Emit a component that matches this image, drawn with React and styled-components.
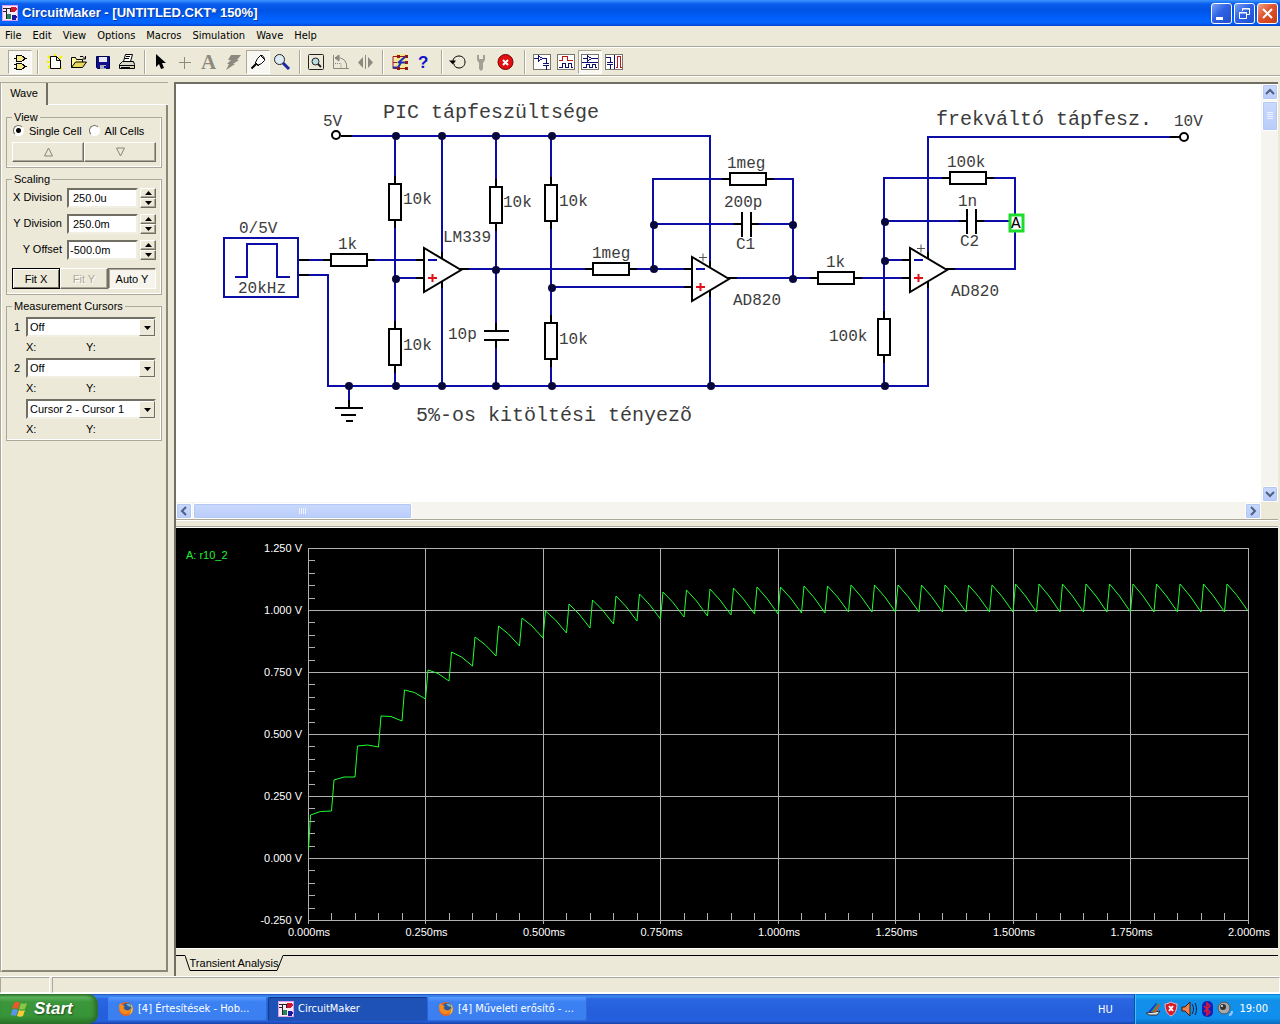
import styled, { createGlobalStyle, css } from "styled-components";

const GlobalStyle = createGlobalStyle`
  * {
    box-sizing: border-box;
  }
  body {
    margin: 0;
    background: #ece9d8;
    color: #000;
    font-family: "Liberation Sans", Arial, sans-serif;
    font-size: 11px;
    line-height: 12px;
  }
  button, input, select {
    font: inherit;
    color: inherit;
    margin: 0;
    border-radius: 0;
  }
`;

const Window = styled.div`
  display: flex;
  flex-direction: column;
  min-height: 100vh;
`;

/* title bar */
const TitleBar = styled.header`
  display: flex;
  align-items: center;
  gap: 4px;
  height: 26px;
  padding: 0 2px;
  background: linear-gradient(#3c96ff 0, #0a5cec 4px, #0053e4 10px, #0060fc 18px, #0466ff 23px, #0043cf 26px);
`;
const Title = styled.h1`
  flex: 1;
  margin: 0;
  font-family: "Liberation Sans", Arial, sans-serif;
  font-size: 13px;
  font-weight: bold;
  line-height: 16px;
  color: #fff;
  text-shadow: 1px 1px #0a3a9c;
`;
const CaptionButtons = styled.div`
  display: flex;
  gap: 2px;
`;
const CaptionButton = styled.button`
  width: 21px;
  height: 21px;
  padding: 0;
  border: 1px solid #fff;
  border-radius: 3px;
  background: ${(p) =>
    p.$close
      ? "linear-gradient(135deg, #f0a088, #e0532c 45%, #c43c14)"
      : "linear-gradient(135deg, #7aa2f4, #2f62e4 45%, #1f4fd0)"};
  svg {
    display: block;
  }
`;

/* menu and toolbar */
const MenuBar = styled.nav`
  display: flex;
  align-items: center;
  gap: 11px;
  height: 21px;
  padding: 0 5px;
  border-bottom: 1px solid #aca899;
`;
const MenuItem = styled.button`
  padding: 0;
  border: none;
  background: none;
  font-family: "DejaVu Sans Condensed", "DejaVu Sans", sans-serif;
  font-size: 11px;
`;
const ToolBar = styled.div`
  display: flex;
  align-items: center;
  height: 29px;
  padding: 0 8px;
  border-top: 1px solid #fff;
  border-bottom: 1px solid #aca899;
  box-shadow: 0 1px #fff;
`;
const ToolSeparator = styled.div`
  width: 2px;
  height: 24px;
  margin: 0 4px 0 5px;
  border-left: 1px solid #aca899;
  border-right: 1px solid #fff;
`;
const ToolButton = styled.button`
  width: 24px;
  height: 24px;
  padding: 0;
  border: 1px solid transparent;
  background: none;
  ${(p) =>
    p.$pressed &&
    css`
      border-color: #aca899 #fff #fff #aca899;
      background: #f8f7f1;
    `}
  svg {
    display: block;
    margin: -1px;
  }
`;

/* workspace */
const Workspace = styled.main`
  flex: 1;
  display: flex;
  gap: 6px;
  padding: 6px 2px 0 0;
`;
const SidePanel = styled.aside`
  flex: 0 0 168px;
  display: flex;
  flex-direction: column;
  margin-bottom: 4px;
  border-top: 1px solid #aca899;
  border-left: 1px solid #aca899;
`;
const SideTabs = styled.div`
  display: flex;
  height: 22px;
  &::after {
    content: "";
    flex: 1;
    border-bottom: 1px solid #fff;
  }
`;
const SideTab = styled.button`
  width: 47px;
  padding: 0 0 2px;
  border: none;
  border-left: 1px solid #fff;
  border-right: 2px solid #716f64;
  background: #ece9d8;
`;
const SideBody = styled.div`
  flex: 1;
  display: flex;
  flex-direction: column;
  gap: 5px;
  padding: 6px 4px 0;
  border-left: 1px solid #fff;
  border-right: 2px solid #8b887a;
  border-bottom: 2px solid #8b887a;
`;
const Group = styled.fieldset`
  min-width: 0;
  margin: 0;
  padding: ${(p) => p.$top || 0}px 5px 5px;
  border: 1px solid #aca899;
  box-shadow: inset -1px -1px #fff;
  &:last-child {
    padding-bottom: 0;
  }
`;
const GroupTitle = styled.legend`
  padding: 0 2px;
  line-height: 12px;
`;
const RadioRow = styled.div`
  display: flex;
  gap: 6px;
  height: 15px;
`;
const RadioLabel = styled.label`
  display: flex;
  align-items: center;
  gap: 5px;
  padding-left: 1px;
  white-space: nowrap;
`;
const Radio = styled.input`
  appearance: none;
  width: 11px;
  height: 11px;
  border: 1px solid;
  border-color: #716f64 #fff #fff #716f64;
  border-radius: 50%;
  background: #fff;
  &:checked {
    background: radial-gradient(#000 2px, #fff 3px);
  }
`;
const ButtonRow = styled.div`
  display: flex;
  height: ${(p) => p.$height}px;
  margin-top: ${(p) => p.$gap}px;
`;
const PushButton = styled.button`
  flex: 1;
  padding: 0;
  border: 1px solid;
  border-color: #fff #716f64 #716f64 #fff;
  background: #ece9d8;
  box-shadow: inset -1px -1px #aca899;
  svg {
    display: block;
    margin: auto;
  }
  ${(p) =>
    p.$focus &&
    css`
      border-color: #000;
      box-shadow: inset 1px 1px #fff, inset -1px -1px #716f64;
    `}
  ${(p) =>
    p.$pressed &&
    css`
      border-color: #716f64 #fff #fff #716f64;
      background: #f6f4ec;
      box-shadow: inset 1px 1px #aca899;
    `}
  &:disabled {
    color: #aca899;
    text-shadow: 1px 1px #fff;
  }
`;
const FieldRow = styled.div`
  display: grid;
  grid-template-columns: 1fr 71px 16px;
  gap: 2px;
  height: 20px;
  & + & {
    margin-top: 6px;
  }
`;
const FieldLabel = styled.label`
  padding: 3px 3px 0 0;
  text-align: right;
  white-space: nowrap;
`;
const Field = styled.input`
  min-width: 0;
  width: 100%;
  padding: 0 0 0 ${(p) => (p.$negative ? 1 : 4)}px;
  border: 2px solid;
  border-color: #716f64 #f1efe2 #f1efe2 #716f64;
  background: #fff;
`;
const Spinner = styled.div`
  display: grid;
  grid-template-rows: 1fr 1fr;
`;
const CursorRow = styled.div`
  display: grid;
  grid-template-columns: 14px 1fr;
  height: 20px;
  line-height: 20px;
`;
const CursorLabel = styled.label`
  padding-left: 2px;
`;
const Combo = styled.div`
  grid-column: 2;
  display: grid;
  height: 20px;
`;
const Select = styled.select`
  grid-area: 1 / 1;
  appearance: none;
  height: 20px;
  padding: 0 2px;
  border: 2px solid;
  border-color: #716f64 #f1efe2 #f1efe2 #716f64;
  background: #fff;
  line-height: 16px;
`;
const ComboArrow = styled.span`
  grid-area: 1 / 1;
  justify-self: end;
  display: flex;
  align-items: center;
  justify-content: center;
  width: 16px;
  height: 17px;
  margin: 2px 1px 0 0;
  border: 1px solid;
  border-color: #fff #716f64 #716f64 #fff;
  background: #ece9d8;
  pointer-events: none;
`;
const Readout = styled.div`
  display: grid;
  grid-template-columns: 60px 1fr;
  height: 21px;
  padding-left: 14px;
  line-height: 20px;
`;

const Documents = styled.div`
  flex: 1;
  min-width: 0;
  display: flex;
  flex-direction: column;
  border-left: 2px solid #716f64;
`;
const SheetFrame = styled.section`
  flex: 1;
  display: grid;
  grid-template-columns: 1fr 17px;
  grid-template-rows: 1fr 17px;
  min-height: 200px;
  border-top: 2px solid #716f64;
  border-bottom: 1px solid #aca899;
`;
const Sheet = styled.div`
  min-width: 0;
  overflow: hidden;
  background: #fff;
  svg {
    display: block;
  }
`;
const ScrollBar = styled.div`
  display: flex;
  flex-direction: ${(p) => (p.$vertical ? "column" : "row")};
  justify-content: space-between;
  padding: ${(p) => (p.$vertical ? "0 0 0 1px" : "1px 0 0")};
  background: #f5f4ee;
`;
const ScrollGroup = styled.div`
  display: flex;
  flex-direction: inherit;
  gap: 1px;
`;
const ScrollButton = styled.button`
  width: ${(p) => p.$w || 16}px;
  height: ${(p) => p.$h || 16}px;
  padding: 0;
  border: 1px solid #fff;
  border-radius: 2px;
  box-shadow: inset 0 0 0 1px #b4c8f4;
  background: linear-gradient(#cad9fc, #b9cdfa);
  svg {
    display: block;
    margin: auto;
  }
`;
const Splitter = styled.div`
  height: 8px;
  border-top: 1px solid #fff;
  border-bottom: 1px solid #fff;
  box-shadow: inset 0 -1px #aca899;
`;
const PlotArea = styled.section`
  height: 420px;
  background: #000;
  svg {
    display: block;
    width: 100%;
    height: 100%;
  }
`;
const PlotTabs = styled.div`
  display: flex;
  height: 28px;
  padding-top: 6px;
  border-top: 1px solid #fff;
`;
const PlotRule = styled.div`
  flex: ${(p) => (p.$lead ? "0 0 9px" : "1")};
  border-top: 1px solid #000;
`;
const PlotTab = styled.button`
  display: grid;
  padding: 0;
  height: 16px;
  border: none;
  background: none;
  svg,
  span {
    grid-area: 1 / 1;
  }
  span {
    padding-top: 1px;
    line-height: 14px;
  }
`;

const StatusBar = styled.footer`
  display: grid;
  grid-template-columns: 50px 1fr;
  gap: 2px;
  height: 18px;
  border-top: 1px solid #fff;
  border-bottom: 1px solid #fff;
`;
const StatusCell = styled.div`
  border: 1px solid;
  border-color: #aca899 #fff #fff #aca899;
`;

/* taskbar */
const TaskBar = styled.footer`
  display: flex;
  height: 30px;
  color: #fff;
  font-family: "DejaVu Sans Condensed", "DejaVu Sans", sans-serif;
  background: linear-gradient(#1f4fb8 0, #3f8cf3 2px, #2a66e2 5px, #245edb 20px, #2460e0 27px, #1941a5);
`;
const StartButton = styled.button`
  display: flex;
  align-items: center;
  gap: 4px;
  width: 98px;
  padding: 0 0 0 10px;
  border: none;
  border-radius: 0 10px 10px 0;
  background: linear-gradient(#2c7a2b 0, #5eb65c 3px, #3c963b 8px, #379437 22px, #2a742a);
  box-shadow: inset -3px 0 4px #2a6a2a;
  color: #fff;
  font-family: "Liberation Sans", Arial, sans-serif;
  font-size: 17px;
  font-style: italic;
  font-weight: bold;
  text-shadow: 1px 1px 2px #1c4a1c;
`;
const Tasks = styled.div`
  flex: 1;
  display: flex;
  gap: 1px;
  padding: 3px 0 3px 10px;
`;
const TaskButton = styled.button`
  display: flex;
  align-items: center;
  gap: 4px;
  width: 159px;
  padding: 0 10px;
  border: none;
  border-radius: 2px;
  background: ${(p) => (p.$active ? "#1e52b7" : "linear-gradient(#5a9cff, #3c81f3 5px, #3a7ef0)")};
  box-shadow: ${(p) => (p.$active ? "inset 1px 1px 1px #123a88" : "inset -1px -1px #2f6ad8")};
  white-space: nowrap;
`;
const Language = styled.div`
  width: 36px;
  line-height: 31px;
`;
const Tray = styled.div`
  display: flex;
  align-items: center;
  gap: 2px;
  width: 146px;
  padding: 0 12px 0 10px;
  border-left: 1px solid #0b4fa8;
  box-shadow: inset 1px 0 #3fc0ff;
  background: linear-gradient(#0c78d8 0, #1cb0f6 2px, #1290e8 6px, #0f8fee 24px, #0b6cc0);
`;
const Clock = styled.time`
  margin-left: auto;
`;

/* schematic */
const PartText = styled.text`
  font-family: "Liberation Mono", "Courier New", monospace;
  font-size: ${(p) => (p.$big ? 20 : 16)}px;
  fill: ${(p) => p.$fill || "#3c3c3c"};
`;
const PlotText = styled.text`
  font-family: "Liberation Sans", Arial, sans-serif;
  font-size: 11px;
  fill: ${(p) => p.$fill || "#fff"};
`;

const toolIcons = {
  gates: (
    <g stroke="#000" fill="#f4e98a" shapeRendering="crispEdges">
      <path d="M6 8.500h4M16 8.500h3M6 14.500h3M6 18.500h3M16 16.500h3" />
      <path d="M8.500 5.500h5c2 1 3 2 3 3s-1 2-3 3h-5zM8.500 13.500h5c2 1 3 2 3 3s-1 2-3 3h-5z" />
    </g>
  ),
  create: (
    <g>
      <path d="M5 6l4 4M5 18l3-3M19 6l-3 3M19 19l-3-3M4 12h4M12 4v4" stroke="#f5f200" strokeWidth="2" />
      <path d="M7.500 6.500h6l4 4v8h-10z M13.500 6.500v4h4" fill="#fff" stroke="#000" />
    </g>
  ),
  open: (
    <g stroke="#000">
      <path d="M4.500 17.500v-10h4l1 2h6v3" fill="#fff8a0" />
      <path d="M4.500 17.500l4-5.500h11l-4 5.500z" fill="#e8d85c" />
      <path d="M13 6.500h3l2 2M18.500 6v3h-3" fill="none" />
    </g>
  ),
  save: (
    <g>
      <path d="M5.500 6.500h13v12h-12l-1-1z" fill="#10108c" stroke="#000050" />
      <path d="M8 7h8v5H8z" fill="#e8e8f8" />
      <path d="M9 15h6v4H9z" fill="#a8b0c0" />
      <path d="M13 16h2v2h-2z" fill="#10108c" />
    </g>
  ),
  print: (
    <g stroke="#000" fill="#fff">
      <path d="M8.500 11.500l2-7h7l-2 7z" />
      <path d="M4.500 14.500l3-3h11l1 3v4h-15zM4.500 15.500h15" fill="#d8d8c8" />
      <path d="M11 6.500h4M10 8.500h4M6 17.500h9" />
      <path d="M16 17h2" stroke="#e0d000" />
    </g>
  ),
  arrow: <path d="M6 4v13l3-3 2 5 3-1-2-5h4z" fill="#000" />,
  cross: <path d="M5 12.500h12M10.500 7v12" stroke="#8c8a80" />,
  text: (
    <text x="3" y="19" fontFamily="Liberation Serif, serif" fontSize="21" fontWeight="bold" fill="#8c8a80">
      A
    </text>
  ),
  bolt: <path d="M9 5h10l-4 5h2l-6 4h2l-9 6 3-6H5l4-4H6z" fill="#8c8a80" />,
  probe: (
    <g fill="#fff" stroke="#000">
      <path d="M5.500 18.500l5-5" strokeWidth="2" />
      <path d="M9.500 12.500l2-4 3-3 2 0 2 3 0 2-3 3-4 2z" />
      <path d="M9 12l4 4M14 5l5 5" />
    </g>
  ),
  zoom: (
    <g>
      <circle cx="9.500" cy="9.500" r="5" fill="#dcecf4" stroke="#222" />
      <path d="M13 13l6 6" stroke="#1828a0" strokeWidth="3" />
    </g>
  ),
  fit: (
    <g stroke="#222" fill="none">
      <rect x="3.500" y="4.500" width="15" height="15" rx="1" />
      <circle cx="10.500" cy="11.500" r="3.500" fill="#b8dce0" />
      <path d="M13 14l3 3" strokeWidth="2" />
    </g>
  ),
  rotate: (
    <g fill="none" stroke="#8c8a80">
      <path d="M4.500 5v13.500H20M17.500 18v-4l-2-4-4-2H6" />
      <path d="M6 8l4-3v6z" fill="#8c8a80" />
      <path d="M6 13.500h6v5" strokeDasharray="1 1" />
    </g>
  ),
  mirror: (
    <g fill="#8c8a80">
      <path d="M10 7v11l-5-5.500zM15 7v11l5-5.500z" />
      <path d="M12 5h1v14h-1z" />
    </g>
  ),
  netlist: (
    <g>
      <path d="M7 4h12v16H7z" fill="#f8e88c" />
      <path d="M19 6.500H5v12h14M5 12.500h4" fill="none" stroke="#a01818" />
      <path d="M5 17.500h5l3-5h6M10 13l8-7" fill="none" stroke="#1830c0" strokeWidth="2" />
      <path d="M9 5h3v3H9zM17 5h3v3h-3zM17 11h3v3h-3zM9 17h3v3H9zM17 17h3v3h-3z" fill="#901818" />
    </g>
  ),
  help: (
    <text x="6" y="18" fontFamily="Liberation Sans, sans-serif" fontSize="17" fontWeight="bold" fill="#1010c8">
      ?
    </text>
  ),
  reset: (
    <g fill="none" stroke="#000">
      <path d="M6 11c0-3 3-5 6-5s6 2 6 6-3 6-6 6-5-2-5-4" />
      <path d="M2 10.500h7l-3 4z" fill="#000" stroke="none" />
    </g>
  ),
  wrench: <path d="M6 5l2 0v4h4V5h2v5l-2 3v6l-2 2-2-2v-6l-2-3z" fill="#a3a195" />,
  stop: (
    <g>
      <circle cx="10.500" cy="12" r="7.500" fill="#e01010" stroke="#700" />
      <path d="M8 10l5 5M13 10l-5 5" stroke="#fff" strokeWidth="2" />
    </g>
  ),
  viewSheet: (
    <g fill="none" shapeRendering="crispEdges">
      <rect x="3.500" y="4.500" width="17" height="15" fill="#fff" stroke="#77756c" />
      <path d="M4 8.500h4M8.500 6v5l4-2.500zM13 8.500h3v5M13 13.500h6M13 15.500h6M16.500 16v4" stroke="#101070" />
    </g>
  ),
  viewWave: (
    <g fill="none" shapeRendering="crispEdges">
      <rect x="3.500" y="4.500" width="17" height="15" fill="#fff" stroke="#77756c" />
      <path d="M5 10.500h3v-4h5v4h6" stroke="#c01818" />
      <path d="M5 17.500h3v-4h3v4h3v-4h3v4h2" stroke="#101070" />
    </g>
  ),
  viewSplitH: (
    <g fill="none" shapeRendering="crispEdges">
      <rect x="3.500" y="4.500" width="17" height="15" fill="#fff" stroke="#77756c" />
      <path d="M5 8.500h4M9.500 6v5l4-2.500zM14 8.500h6M4 12.500h16M5 17.500h3v-3h3v3h3v-3h3v3h2" stroke="#101070" />
    </g>
  ),
  viewSplitV: (
    <g fill="none" shapeRendering="crispEdges">
      <rect x="3.500" y="4.500" width="17" height="15" fill="#fff" stroke="#77756c" />
      <path d="M4 7.500h4v5M5 12.500h6M5 14.500h6M8.500 15v4M12.500 5v14" stroke="#101070" />
      <path d="M14 17.500h1.500v-11h3v11H20" stroke="#c01818" />
    </g>
  ),
};

const tools = [
  [["gates", "Parts browser", true]],
  [["create", "New"], ["open", "Open"], ["save", "Save"], ["print", "Print"]],
  [["arrow", "Select"], ["cross", "Wire"], ["text", "Text"], ["bolt", "Delete"], ["probe", "Probe", true], ["zoom", "Zoom"]],
  [["fit", "Fit"], ["rotate", "Rotate"], ["mirror", "Mirror"]],
  [["netlist", "Netlist"], ["help", "Help"]],
  [["reset", "Reset"], ["wrench", "Setup"], ["stop", "Stop"]],
  [["viewSheet", "Schematic"], ["viewWave", "Waveforms"], ["viewSplitH", "Split horizontal", true], ["viewSplitV", "Split vertical"]],
];

const AppIcon = () => (
  <svg width="16" height="16" shapeRendering="crispEdges">
    <rect width="16" height="16" fill="#f8e8f8" />
    <path d="M1 3h9M1 6h3M4 3v11M4 10h4M8 3v4" stroke="#222" fill="none" />
    <path d="M9 2h4l2 2-2 3H9z" fill="#d01830" />
    <path d="M5 9h4v5H5z" fill="#208858" />
    <path d="M10 10h4l1 2-1 3h-4z" fill="#1818a0" />
    <rect x="0.500" y="0.500" width="15" height="15" fill="none" stroke="#e0a0e8" />
  </svg>
);

const Firefox = () => (
  <svg width="16" height="16">
    <circle cx="8" cy="8" r="7" fill="#e8641c" />
    <circle cx="9" cy="7" r="5" fill="#2c5c9c" />
    <path d="M8 3c3-1 5 0 6 3-2-1-3 0-4-1z" fill="#68b8dc" />
    <path d="M1 5c0-2 2-3 2-3 0 2 2 2 4 3-2 1-1 4 1 4 2 1 4 0 5-2 1 3-2 6-5 6-4 0-7-3-7-8z" fill="#f48a20" />
    <path d="M13 3c3 4 2 9-2 11 2-3 3-6 2-11z" fill="#fcc838" />
  </svg>
);

const Triangle = ({ up, outline }) => (
  <svg width={outline ? 11 : 7} height={outline ? 10 : 4} viewBox={outline ? "0 0 11 10" : "0 0 7 4"}>
    {outline ? (
      <path d={up ? "M5.500 1L9.500 9H1.500z" : "M5.500 9L9.500 1H1.500z"} fill="none" stroke="#88867a" />
    ) : (
      <path d={up ? "M3.500 0L7 4H0z" : "M3.500 4L7 0H0z"} />
    )}
  </svg>
);

const Chevron = ({ turn }) => (
  <svg width="10" height="10">
    <path d="M1 7l4-4 4 4" transform={`rotate(${turn} 5 5)`} fill="none" stroke="#4d6185" strokeWidth="2" />
  </svg>
);

const wires = [
  "M350 136H710V262M710 296V386",
  "M298 275H328V386H928V284",
  "M395 136V386M442 136V258M442 283V386M496 136V331M496 340V386M551 136V386",
  "M298 260H424M396 278H424M460 269H692M552 287H692",
  "M653 269V179H793V278M653 224H742M751 224H793M728 278H910",
  "M884 386V178H1015V269H946M884 221H967M976 221H1015M884 260H910",
  "M1171 137H928V258M349 386V400",
];
const leads = [
  "M341 136H352M1170 137H1180M299 260H309M299 275H309",
  "M395 176V228M395 321V373M496 179V231M551 177V229M551 315V367M884 311V363",
  "M323 260H375M585 269H637M722 179H774M810 278H862M942 178H994",
  "M496 323V331M496 340V348M734 224H742M751 224H759M959 221H967M976 221H984",
  "M416 260H424M416 278H424M460 269H469M684 269H692M684 287H692M728 278H737M902 260H910M902 278H910M946 269H955",
  "M484 331H509M484 340H509M742 212V237M751 212V237M967 209V234M976 209V234",
  "M349 400V408M335 408H363M341 415H356M346 421H353",
  "M442 252V259M442 282V288M710 261V268M710 291V297M928 252V259M928 282V288",
];
const resistorsV = [[389, 184], [389, 329], [490, 187], [545, 185], [545, 323], [878, 319]];
const resistorsH = [[331, 254], [593, 263], [730, 173], [818, 272], [950, 172]];
const joints = [
  [396, 136], [442, 136], [496, 136], [552, 136], [396, 279], [496, 270], [552, 288],
  [654, 225], [654, 269], [793, 225], [793, 279], [885, 222], [885, 261],
  [349, 386], [396, 386], [442, 386], [496, 386], [552, 386], [711, 386], [885, 386],
];
const opamps = [[424, 248], [692, 257], [910, 248]];
const partTexts = [
  [323, 126, "5V"], [403, 204, "10k"], [443, 242, "LM339"], [503, 207, "10k"], [559, 206, "10k"],
  [239, 233, "0/5V"], [238, 293, "20kHz"], [338, 249, "1k"], [403, 350, "10k"], [448, 339, "10p"],
  [559, 344, "10k"], [592, 258, "1meg"], [727, 168, "1meg"], [724, 207, "200p"], [736, 249, "C1"],
  [733, 305, "AD820"], [826, 267, "1k"], [829, 341, "100k"], [947, 167, "100k"], [958, 206, "1n"],
  [960, 246, "C2"], [951, 296, "AD820"], [1174, 126, "10V"],
];

const Schematic = () => (
  <svg width="1085" height="418" viewBox="176 84 1085 418">
    <g shapeRendering="crispEdges" fill="none" strokeWidth="2">
      <path d={wires.join("")} stroke="#0c0ca8" />
      <path d={leads.join("")} stroke="#000" />
      <path d="M224 238h74v59h-74zM235 277h12v-33h30v33h13" stroke="#0c0ca8" />
      {resistorsV.map(([x, y]) => (
        <rect key={`${x}-${y}`} x={x} y={y} width="12" height="36" fill="#fff" stroke="#000" />
      ))}
      {resistorsH.map(([x, y]) => (
        <rect key={`${x}-${y}`} x={x} y={y} width="36" height="12" fill="#fff" stroke="#000" />
      ))}
    </g>
    {opamps.map(([x, y]) => (
      <g key={x} fill="none" strokeWidth="2">
        <path d={`M${x} ${y}v44l37 -22z`} fill="#fff" stroke="#000" />
        <path d={`M${x + 4} ${y + 12}h9`} stroke="#0c0ca8" />
        <path d={`M${x + 4} ${y + 30}h9m-4.500 -4v8`} stroke="#e01018" />
      </g>
    ))}
    <path d="M699 257.500h8m-4 -4v8M917 248.500h8m-4 -4v8" stroke="#555" />
    {joints.map(([x, y]) => (
      <circle key={`${x}-${y}`} cx={x} cy={y} r="4" fill="#08083c" />
    ))}
    <circle cx="336" cy="135" r="4" fill="#fff" stroke="#000" strokeWidth="2" />
    <circle cx="1184" cy="137" r="4" fill="#fff" stroke="#000" strokeWidth="2" />
    {partTexts.map(([x, y, text]) => (
      <PartText key={`${x}-${y}`} x={x} y={y}>{text}</PartText>
    ))}
    <PartText $big x="383" y="118">PIC tápfeszültsége</PartText>
    <PartText $big x="936" y="125">frekváltó tápfesz.</PartText>
    <PartText $big x="416" y="421">5%-os kitöltési tényezõ</PartText>
    <rect x="1010" y="215" width="13" height="16" fill="#fff" stroke="#1cdc2c" strokeWidth="3" />
    <PartText x="1011" y="228" $fill="#000">A</PartText>
  </svg>
);

// sawtooth levels: [after the rising edge, before the next one]
const teeth = [
  [814, 811], [779, 777], [745, 747], [716, 721], [690, 699], [670, 681], [652, 666], [637, 656],
  [626, 646], [618, 638], [611, 633], [604, 628], [600, 624], [596, 621], [594, 619], [592, 617],
  [590, 616], [589, 615], [588, 614], [587, 614], [587, 613], [586, 613], [586, 612], [585, 612],
  [585, 612], [585, 612], [585, 612], [585, 612], [585, 612], [585, 612], [584, 612], [584, 612],
  [584, 612], [584, 612], [584, 612], [584, 612], [584, 612], [584, 612], [584, 612], [584, 611],
];
const trace = teeth.reduce((d, [top, end], i) => {
  const x = 308.5 + i * 23.5;
  const mid = (top + end) / 2 - (i < 3 ? 1 : 2);
  return `${d}L${x + 2} ${top + (i < 3 ? 1 : 0)}L${x + 12} ${mid}L${x + 23} ${end}`;
}, "M308.500 850");
const columns = [...Array(9).keys()];
const rows = [...Array(7).keys()];
const gridX = (step) => Math.floor(308 + step * 23.5) + 0.5;

const Plot = () => (
  <svg viewBox="176 528 1102 420" preserveAspectRatio="xMinYMin meet">
    <g stroke="#b0b0b0" shapeRendering="crispEdges">
      {columns.map((i) => (
        <path key={i} d={`M${gridX(i * 5)} 548V924`} />
      ))}
      {rows.map((i) => (
        <path key={i} d={`M308 ${548.5 + i * 62}H1249`} />
      ))}
      {[...Array(30).keys()].map((i) => (
        <path key={i} d={`M308 ${548.5 + i * 12.4}h7`} />
      ))}
      {[...Array(40).keys()].map((i) => (
        <path key={i} d={`M${gridX(i)} 920v-7`} />
      ))}
    </g>
    <path d={trace} fill="none" stroke="#20ff30" />
    <PlotText x="186" y="559" $fill="#20f030">A: r10_2</PlotText>
    {rows.map((i) => (
      <PlotText key={i} x="302" y={552 + i * 62} textAnchor="end">
        {(1.25 - i * 0.25).toFixed(3)} V
      </PlotText>
    ))}
    {columns.map((i) => (
      <PlotText key={i} x={309 + i * 117.5} y="936" textAnchor="middle">
        {(i * 0.25).toFixed(3)}ms
      </PlotText>
    ))}
  </svg>
);

const CursorPicker = ({ id, number, options }) => (
  <>
    <CursorRow>
      {number && <CursorLabel htmlFor={id}>{number}</CursorLabel>}
      <Combo>
        <Select id={id} aria-label={number ? undefined : "Difference"}>
          {options.map((o) => (
            <option key={o}>{o}</option>
          ))}
        </Select>
        <ComboArrow>
          <Triangle />
        </ComboArrow>
      </Combo>
    </CursorRow>
    <Readout>
      <span>X:</span>
      <span>Y:</span>
    </Readout>
  </>
);

const fields = [
  ["xdiv", "X Division", "250.0u"],
  ["ydiv", "Y Division", "250.0m"],
  ["yoff", "Y Offset", "-500.0m"],
];

const App = () => {
  return (
    <Window>
      <GlobalStyle />
      <TitleBar>
        <AppIcon />
        <Title>CircuitMaker - [UNTITLED.CKT* 150%]</Title>
        <CaptionButtons>
          <CaptionButton aria-label="Minimize">
            <svg width="19" height="19"><path d="M4 13h7v3H4z" fill="#fff" /></svg>
          </CaptionButton>
          <CaptionButton aria-label="Restore">
            <svg width="19" height="19" fill="none" stroke="#fff">
              <path d="M7.500 7V4.500h7v6H12M7 5h8M4.500 8.500h7v6h-7zM4 9h8" />
            </svg>
          </CaptionButton>
          <CaptionButton $close aria-label="Close">
            <svg width="19" height="19"><path d="M5 5l9 9M14 5l-9 9" stroke="#fff" strokeWidth="2" /></svg>
          </CaptionButton>
        </CaptionButtons>
      </TitleBar>
      <MenuBar>
        {["File", "Edit", "View", "Options", "Macros", "Simulation", "Wave", "Help"].map((m) => (
          <MenuItem key={m}>{m}</MenuItem>
        ))}
      </MenuBar>
      <ToolBar>
        {tools.map((group, i) => [
          i > 0 && <ToolSeparator key={i} />,
          ...group.map(([icon, label, pressed]) => (
            <ToolButton key={icon} $pressed={pressed} aria-label={label}>
              <svg width="24" height="24">{toolIcons[icon]}</svg>
            </ToolButton>
          )),
        ])}
      </ToolBar>

      <Workspace>
        <SidePanel>
          <SideTabs>
            <SideTab>Wave</SideTab>
          </SideTabs>
          <SideBody>
            <Group>
              <GroupTitle>View</GroupTitle>
              <RadioRow>
                <RadioLabel>
                  <Radio type="radio" name="cells" defaultChecked />
                  Single Cell
                </RadioLabel>
                <RadioLabel>
                  <Radio type="radio" name="cells" />
                  All Cells
                </RadioLabel>
              </RadioRow>
              <ButtonRow $height={20} $gap={4}>
                <PushButton aria-label="Previous cell"><Triangle up outline /></PushButton>
                <PushButton aria-label="Next cell"><Triangle outline /></PushButton>
              </ButtonRow>
            </Group>
            <Group $top={3}>
              <GroupTitle>Scaling</GroupTitle>
              {fields.map(([id, label, value]) => (
                <FieldRow key={id}>
                  <FieldLabel htmlFor={id}>{label}</FieldLabel>
                  <Field id={id} defaultValue={value} $negative={value[0] === "-"} />
                  <Spinner>
                    <PushButton aria-label={`${label} up`}><Triangle up /></PushButton>
                    <PushButton aria-label={`${label} down`}><Triangle /></PushButton>
                  </Spinner>
                </FieldRow>
              ))}
              <ButtonRow $height={21} $gap={8}>
                <PushButton $focus>Fit X</PushButton>
                <PushButton disabled>Fit Y</PushButton>
                <PushButton $pressed>Auto Y</PushButton>
              </ButtonRow>
            </Group>
            <Group $top={5}>
              <GroupTitle>Measurement Cursors</GroupTitle>
              <CursorPicker id="cursor1" number="1" options={["Off"]} />
              <CursorPicker id="cursor2" number="2" options={["Off"]} />
              <CursorPicker id="cursorDiff" options={["Cursor 2 - Cursor 1"]} />
            </Group>
          </SideBody>
        </SidePanel>

        <Documents>
          <SheetFrame>
            <Sheet>
              <Schematic />
            </Sheet>
            <ScrollBar $vertical>
              <ScrollGroup>
                <ScrollButton aria-label="Scroll up"><Chevron turn={0} /></ScrollButton>
                <ScrollButton $h={30} aria-label="Vertical position">
                  <svg width="8" height="8"><path d="M1 .5h6M1 2.500h6M1 4.500h6M1 6.500h6" stroke="#eef4ff" /></svg>
                </ScrollButton>
              </ScrollGroup>
              <ScrollButton aria-label="Scroll down"><Chevron turn={180} /></ScrollButton>
            </ScrollBar>
            <ScrollBar>
              <ScrollGroup>
                <ScrollButton aria-label="Scroll left"><Chevron turn={270} /></ScrollButton>
                <ScrollButton $w={219} aria-label="Horizontal position">
                  <svg width="8" height="8"><path d="M.5 1v6M2.500 1v6M4.500 1v6M6.500 1v6" stroke="#eef4ff" /></svg>
                </ScrollButton>
              </ScrollGroup>
              <ScrollButton aria-label="Scroll right"><Chevron turn={90} /></ScrollButton>
            </ScrollBar>
          </SheetFrame>
          <Splitter />
          <PlotArea>
            <Plot />
          </PlotArea>
          <PlotTabs>
            <PlotRule $lead />
            <PlotTab>
              <svg width="98" height="16" fill="none" stroke="#000">
                <path d="M0 .5l5 15h87l6-15" />
              </svg>
              <span>Transient Analysis</span>
            </PlotTab>
            <PlotRule />
          </PlotTabs>
        </Documents>
      </Workspace>

      <StatusBar>
        <StatusCell />
        <StatusCell />
      </StatusBar>

      <TaskBar>
        <StartButton>
          <svg width="20" height="20">
            <path d="M4 4c2-2 4-1 6 0l-2 6c-2-1-4-1-6 0z" fill="#e8582c" />
            <path d="M11 4c2 1 4 1 6 0l-2 6c-2 1-4 1-6 0z" fill="#88c840" />
            <path d="M2 11c2-1 4-1 6 0l-2 6c-2-1-4-1-5 0z" fill="#5c94ec" />
            <path d="M9 11c2 1 4 1 6 0l-2 6c-2 1-4 1-6 0z" fill="#f8cc38" />
          </svg>
          Start
        </StartButton>
        <Tasks>
          <TaskButton><Firefox />[4] Értesítések - Hob...</TaskButton>
          <TaskButton $active><AppIcon />CircuitMaker</TaskButton>
          <TaskButton><Firefox />[4] Műveleti erősítő - ...</TaskButton>
        </Tasks>
        <Language>HU</Language>
        <Tray>
          <svg width="16" height="16">
            <path d="M1 12l9-1 5-1-3 4H4z" fill="#e8e8e8" stroke="#333" />
            <path d="M5 11l8-9 1 1-6 8z" fill="#20a848" />
            <path d="M3 11l8-9 1 1-6 8z" fill="#2038d0" />
            <path d="M8 11l6-8 1 1-4 7z" fill="#e84820" />
          </svg>
          <svg width="16" height="16">
            <path d="M8 1c2 1 4 2 6 2 0 6-2 10-6 12C4 13 2 9 2 3c2 0 4-1 6-2z" fill="#d81828" stroke="#e8c0c0" />
            <path d="M6 5l4 5M10 5l-4 5" stroke="#fff" strokeWidth="2" />
          </svg>
          <svg width="16" height="16">
            <path d="M1 6h3l5-5v14l-5-5H1z" fill="#f0844c" stroke="#401808" />
            <path d="M11 3c2 3 2 7 0 10M14 2c2 4 2 8 0 12" fill="none" stroke="#101838" />
          </svg>
          <svg width="16" height="16">
            <rect x="3" y="0" width="11" height="16" rx="5" fill="#1020b8" />
            <path d="M5 5l6 6-3 3V2l3 3-6 6" fill="none" stroke="#e01838" strokeWidth="1.500" />
          </svg>
          <svg width="16" height="16">
            <circle cx="7" cy="7" r="6" fill="#a8a8a8" stroke="#555" />
            <circle cx="6" cy="6" r="3" fill="#333" />
            <circle cx="5" cy="5" r="1" fill="#eee" />
            <path d="M12 14c2 0 3-2 3-4" fill="none" stroke="#9cc8ff" strokeWidth="2" />
          </svg>
          <Clock>19:00</Clock>
        </Tray>
      </TaskBar>
    </Window>
  );
};

export default App;
